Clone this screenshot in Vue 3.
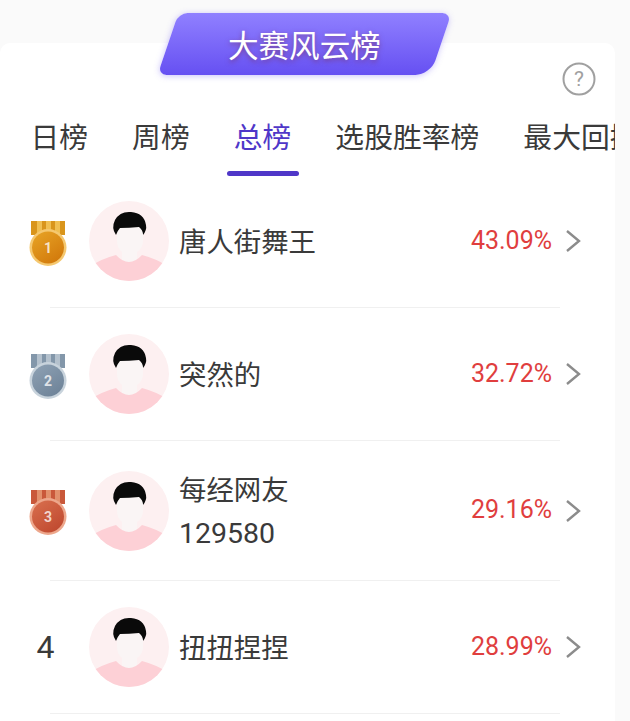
<template>
  <div class="page">
    <div class="card">
      <div class="badge">
        <span class="badge-text">大赛风云榜</span>
      </div>

      <div class="help-row">
        <svg class="help-icon" width="34" height="34" viewBox="0 0 34 34">
          <circle cx="17" cy="17" r="15.5" fill="none" stroke="#a0a0a0" stroke-width="2" />
          <text x="17" y="24" text-anchor="middle" class="help-mark">?</text>
        </svg>
      </div>

      <div class="tabs">
        <div
          v-for="(tab, i) in tabs"
          :key="tab"
          :class="['tab', { 'tab--active': i === activeTab }]"
        >
          {{ tab }}
        </div>
      </div>

      <div class="list">
        <div v-for="item in list" :key="item.rank" class="row">
          <div class="rank">
            <svg v-if="item.medal" width="38" height="45" viewBox="0 0 38 45">
              <defs>
                <linearGradient :id="'face' + item.rank" x1="0" y1="0" x2="0.7" y2="1">
                  <stop offset="0" :stop-color="item.medal.faceTop" />
                  <stop offset="1" :stop-color="item.medal.face" />
                </linearGradient>
              </defs>
              <rect x="2" y="0" width="34" height="14" :fill="item.medal.band" />
              <rect x="8" y="0" width="5" height="14" :fill="item.medal.stripe" />
              <rect x="17" y="0" width="5" height="14" :fill="item.medal.stripe" />
              <rect x="26" y="0" width="5" height="14" :fill="item.medal.stripe" />
              <circle cx="19" cy="26.5" r="18.5" :fill="item.medal.rim" />
              <circle cx="19" cy="26.5" r="16" :fill="'url(#face' + item.rank + ')'" />
              <text x="19" y="32" text-anchor="middle" class="medal-digit">{{ item.rank }}</text>
            </svg>
            <span v-else class="rank-num">{{ item.rank }}</span>
          </div>

          <svg class="avatar" width="80" height="80" viewBox="0 0 80 80">
            <defs>
              <clipPath :id="'clip' + item.rank"><circle cx="40" cy="40" r="40" /></clipPath>
            </defs>
            <g :clip-path="'url(#clip' + item.rank + ')'">
              <rect width="80" height="80" fill="#fdf0f1" />
              <path d="M28 30 Q28 18 41 18 Q54 18 54 30 V40 Q54 47 48 51 V62 H33 V51 Q28 47 28 40 Z" fill="#faf5f5" />
              <path d="M0 66 Q12 58 27 54 Q40 68 53 54 Q68 58 80 66 V80 H0 Z" fill="#fdd0d6" />
              <path d="M27 34 Q22 27 26 19 Q31 10 42 11 Q55 12 57 24 Q58 29 54 34 Q54 29 50 26 Q40 27 31 27 Q29 29 27 34 Z" fill="#0a0a0a" />
            </g>
          </svg>

          <div class="name">{{ item.name }}<span v-if="item.tail" class="name-num">{{ item.tail }}</span></div>
          <div class="rate">{{ item.rate }}</div>
          <svg class="arrow" width="16" height="24" viewBox="0 0 16 24">
            <path d="M2 2 L14 12 L2 22" fill="none" stroke="#8c8c8c" stroke-width="2.4" />
          </svg>
        </div>
      </div>
    </div>
  </div>
</template>

<script setup>
const tabs = ['日榜', '周榜', '总榜', '选股胜率榜', '最大回撤榜']
const activeTab = 2

const gold = { band: '#d9951c', stripe: '#f0bf52', rim: '#f5c870', faceTop: '#e8a526', face: '#d27a0c' }
const silver = { band: '#8397aa', stripe: '#b4c1cd', rim: '#c8d3dc', faceTop: '#8fa2b5', face: '#6f8499' }
const bronze = { band: '#c9583a', stripe: '#e2906c', rim: '#eda78c', faceTop: '#d9704f', face: '#c04a30' }

const list = [
  { rank: 1, medal: gold, name: '唐人街舞王', rate: '43.09%' },
  { rank: 2, medal: silver, name: '突然的', rate: '32.72%' },
  { rank: 3, medal: bronze, name: '每经网友', tail: '129580', rate: '29.16%' },
  { rank: 4, medal: null, name: '扭扭捏捏', rate: '28.99%' },
]
</script>

<style>
html,
body {
  background: #fafafa;
}
</style>

<style scoped>
.page {
  width: 630px;
  height: 721px;
  padding: 43px 15px 0 0;
  box-sizing: border-box;
  overflow: hidden;
  background: #fafafa;
  font-family: 'Noto Sans CJK SC', Roboto, sans-serif;
  color: #3a3a3a;
}

.card {
  position: relative;
  height: 678px;
  background: #fff;
  border-radius: 10px 10px 0 0;
}

/* 顶部标题牌，压在卡片上沿 */
.badge {
  position: absolute;
  left: 168px;
  top: -30px;
  width: 273px;
  height: 62px;
  display: flex;
  align-items: center;
  justify-content: center;
  transform: skewX(-18.7deg);
  border-radius: 9px 9px 15px 9px;
  background: linear-gradient(180deg, #9080ff 0%, #6650f2 100%);
  box-shadow: 0 1px 6px rgba(102, 80, 242, 0.35);
}
.badge-text {
  transform: skewX(18.7deg);
  font-size: 30.6px;
  line-height: 1;
  color: #fff;
  text-shadow: 0 2px 5px rgba(120, 40, 70, 0.55);
}

.help-row {
  display: flex;
  justify-content: flex-end;
  padding: 19px 19px 0 0;
  height: 34px;
}

.tabs {
  display: flex;
  margin-top: 17px;
  padding-left: 8.5px;
  overflow: hidden;
}
.tab {
  position: relative;
  flex: none;
  padding: 0 22px;
  height: 63px;
  font-size: 28.8px;
  line-height: 46px;
  white-space: nowrap;
}
.tab--active {
  color: #4f37c8;
}
.tab--active::after {
  content: '';
  position: absolute;
  left: 14.8px;
  right: 14.8px;
  bottom: 0;
  height: 5px;
  border-radius: 3px;
  background: #4f37c8;
}
.help-mark {
  font-family: Roboto, sans-serif;
  font-size: 21px;
  fill: #a0a0a0;
}

.row {
  display: flex;
  align-items: center;
  margin: 0 55px 0 50px;
  padding: 26px 0;
  border-bottom: 1px solid #f0f0f0;
}
.row:first-child {
  padding-top: 25px;
}
.rank {
  flex: none;
  width: 39px;
  margin-left: -22px;
  margin-right: 22px;
  margin-top: 4px;
  display: flex;
  justify-content: center;
}
.rank-num {
  margin-right: 4px;
  margin-top: -4px;
  font-family: Roboto, sans-serif;
  font-size: 32px;
  line-height: 80px;
}
.medal-digit {
  font-family: Roboto, sans-serif;
  font-size: 14px;
  font-weight: 700;
  fill: #fff;
  fill-opacity: 0.75;
}
.avatar {
  flex: none;
}
.name {
  flex: none;
  width: 200px;
  margin-left: 10px;
  margin-bottom: 2px;
  font-size: 27.4px;
  line-height: 42.5px;
}
.name-num {
  font-family: Roboto, sans-serif;
  font-size: 28.5px;
  line-height: 1;
}
.rate {
  flex: 1;
  margin-bottom: 2px;
  text-align: right;
  font-family: Roboto, sans-serif;
  font-size: 25px;
  color: #e03e3e;
}
.arrow {
  flex: none;
  margin: 0 -21px 0 13px;
}
</style>
